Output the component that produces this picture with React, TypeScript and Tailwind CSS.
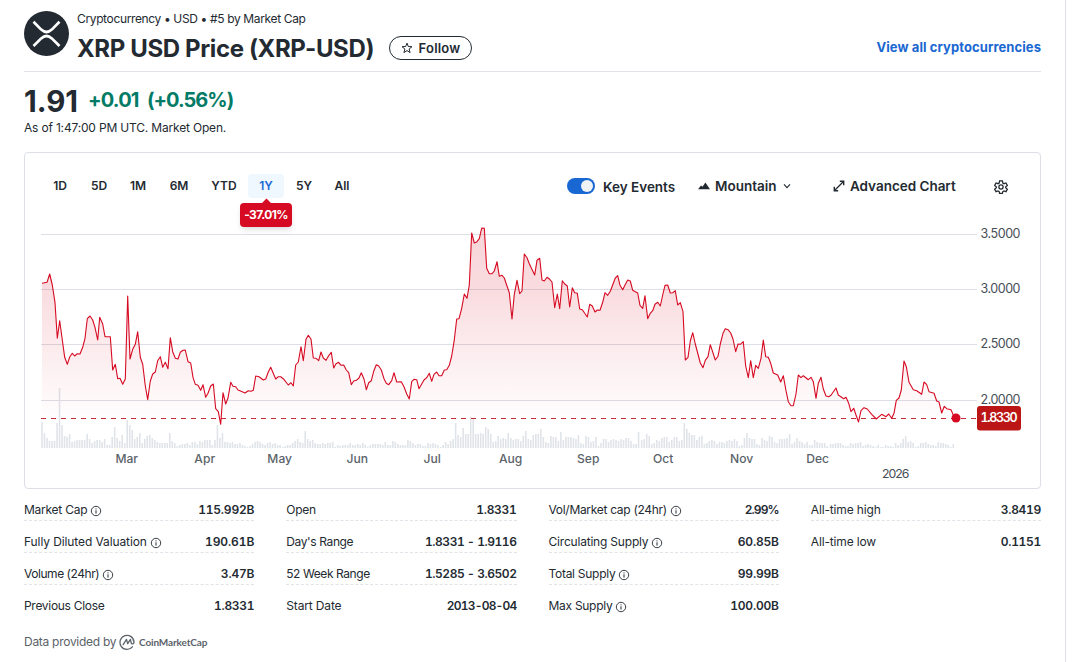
import React from "react";

const RANGES = [
  { label: "1D", box: "w-[32px]" },
  { label: "5D", box: "w-[32px] ml-[7px]" },
  { label: "1M", box: "w-[34px] ml-[6px]" },
  { label: "6M", box: "w-[34px] ml-[7px]" },
  { label: "YTD", box: "w-[42px] ml-[7px]" },
  { label: "1Y", box: "w-[36px] ml-[3px]" },
  { label: "5Y", box: "w-[30px] ml-[5px]" },
  { label: "All", box: "w-[32px] ml-[7px]" },
];

const PRICE =
  "42,283.3 47,282.3 49.7,274 52.3,285 55,302.7 57.3,338.3 59.7,320.7 62.3,340 64.7,357.3 67.3,364.3 69.7,357 72.3,353.3 74.7,356 77.3,353.7 80,354 82.7,347.3 85,338.3 87.3,318.7 90,316 92.7,320 95,327.3 97.7,340 99.7,317.3 102.7,324 105,336.7 110.3,336.7 112.7,370 115.3,364.3 117.7,378.7 120,378.3 122.7,384.3 125.3,379 127.7,296 130,359 132.7,349.3 135.3,344.3 137.7,331.7 140.3,357.3 142.7,364.3 145.3,386 147.7,399.7 150.3,381 152.7,374 155.3,372 157.7,360.7 160.3,356.7 162.7,367.3 165.3,362.3 168,368.7 170.3,337.7 172.7,351.7 175.3,358.3 178,359 180.3,352.3 183,350.3 185.3,350 188,361.7 190.7,363 193,377.3 195.3,384.3 198,385.3 200.7,390.3 203,384.7 205.7,397.3 208,393.3 210.7,386 213.3,384 215.7,408.7 218.3,411.7 220.7,424.3 223,392.7 225.7,404 228,398 230.7,382.3 233,386.3 235.7,386.7 238,390 240,390.7 245,393 248.3,390.7 251,391.3 253.3,390.3 255.7,376 259,376.7 263.3,380 265.7,379 268.3,372 270.7,367.3 275.7,379 278.3,376.7 280.7,376.7 283.3,378.7 288.3,385 291,382.7 293.3,386 295.7,365 298.3,362 301,346.7 303.3,360.7 306,339.3 308.3,335.3 311,339 313.3,358 316,358.3 318.7,360.7 321,352 323.3,358 326,360.3 328.7,355.7 331.3,352.3 333.7,368 336,363.7 338.7,362.3 341,365.3 343.7,365 346.3,370 348.7,372.7 351.3,384.7 353.7,381 356.3,380.3 359,378 361.3,372.7 364,379 366.3,389.7 368.7,382.7 371.3,380.7 373.7,371.3 376.3,364.7 378.7,366 381.3,370 384,378.7 386.3,383.3 388.7,384.7 391.7,380.7 394,372.7 396.7,382 401.3,381.7 404,386.7 406.7,394 409.3,399 411.7,381.7 414,379.3 416.7,379.7 419,388.7 421.7,384 424,380 426.7,377.7 429.3,373.3 431.7,381.3 434,374.3 436.7,372 439,375.7 441.7,375.7 444.3,370 446.7,369.7 449.3,365.3 451.7,356 454.2,340.7 456.7,319 459,318.7 461.7,308.3 464.3,294 467,298.3 469.3,285 471.7,233 474.3,243 477,241.7 479.3,238.7 481.7,228 484.3,228.3 486.7,268.3 489.3,273.7 492,273.7 494.3,271 497,261.7 499.3,276.3 502,275.3 504.3,278 507,286 509.3,292.7 512,319 514.3,294.3 517,280.3 519.7,293.7 522,291 524.3,254 527,257.7 529.3,263.7 534.7,275 537,260.3 539.7,258.3 542,280 544.3,281 547,277.3 549.7,279.3 552,282 554.7,307.7 557.3,294 559.7,308.7 562.3,280.7 564.7,284 567.3,286 569.7,307 572.3,287.7 574.7,292.7 577.3,293.3 579.7,309 582.3,309.7 584.7,313.3 587.3,317 589.7,304.3 592.3,306 595,312 597.3,310 600,310.3 602.7,302.3 605,292.7 607.7,295.3 610.3,291.3 615.3,278 617.7,275.7 620,285.3 622.7,289.7 625,285 627.7,280 630.3,281 632.7,290.3 635.3,291.7 637.7,293 640,305.3 642.7,308.3 645,295.7 647.7,318.7 650,313.7 652.7,310.7 655,304.3 657.7,302.3 660.3,306 662.7,295 665,285.3 667.7,285 670.3,293 672.7,292.7 675.3,290.7 677.7,305 680.3,302.7 683,311.7 685.3,360 688,357.3 690.3,341 692.7,332.7 695.3,344 700.3,363 703,367.7 705.3,360.3 708,356.7 710.3,344.7 715.3,360 718,356.3 720.3,344 723,333.3 725.3,328.7 728,329.7 730.7,333 733,339 735.7,351.7 738,344 740.3,344.3 743.3,341.7 745.7,366 748.3,377.7 750.7,360.7 753.3,377.7 755.7,365.3 758.3,368.3 761,358.3 763.3,340 765.7,356.7 768.3,357.3 770.7,363.3 773.3,373 777.7,375 780.7,382 783.3,375.7 786,390.7 788.3,401.7 791,405.7 793.3,405.7 796,394 798.3,375 801,377.7 803.3,375.7 808.3,379.7 811,377.3 813.3,381.7 816,398.3 818.3,383.3 821,377.3 823.3,389 826,396 828.7,396.7 831,395.3 836,388 838.3,395 843.7,398.7 846,397.3 848.7,403.3 851,411.7 853.7,408.3 856,415 858.5,422 861,410.7 864,407.7 867.3,409 871.7,414.3 876.3,419 881.7,414.3 886,416.7 888.7,414 891.7,418.3 894,413.3 896.3,400.3 899,398 901.3,390 904,361 906.3,366.7 909,382.3 913.3,389.7 916.7,390.7 921.7,394.3 924,382 926.7,384.7 929,391.7 934,393.3 936.7,401 939,402 941.7,413 944.3,406.3 946.7,408.7 951,409.7 953.3,415 956,418";

// Daily volume bars, grouped by the x position of the group's first bar.
const VOLUME = [
  { x: 42, bars: [26, 15, 10, 7, 7, 7, 25, 60, 23, 12, 11, 14, 6, 7, 8, 8, 8, 8, 14, 9, 5, 7, 8, 8, 6, 9, 3, 3, 11, 21, 10, 7, 13, 5, 28, 23, 18, 9, 11, 15, 5, 9, 12, 13, 10, 8, 6, 5, 5, 5, 5, 15, 7, 5, 2, 3, 4, 4, 5, 3, 6, 6, 4, 7, 6, 8, 8, 8, 3, 8, 23, 10, 15, 6, 6, 5, 6, 4, 4] },
  { x: 240, bars: [5, 3, 2, 1, 2, 4, 6, 7, 6, 4, 3, 5, 6, 4, 5, 3, 3, 1, 2, 3, 3, 5, 7, 9, 6, 5, 17, 9, 7, 8, 5, 4, 4, 5, 4, 5, 5, 6, 1, 3, 2, 3, 3, 3, 5, 3, 3, 4, 3, 5, 3, 1, 3, 4, 4, 4, 4, 3, 6, 3, 3, 7, 6, 4, 3, 3, 3, 8, 7, 5, 3, 4, 4, 2, 2, 5, 4, 5, 4, 3] },
  { x: 440.6, bars: [1, 3, 6, 4, 7, 9, 25, 13, 11, 20, 14, 14, 31, 30, 14, 14, 15, 14, 21, 19, 14, 6, 7, 12, 9, 10, 9, 15, 10, 8, 9, 9, 7, 12, 17, 9, 8, 13, 14, 14, 19, 11, 6, 5, 12, 11, 11, 7, 16, 8, 11, 11, 11, 10, 9, 13, 5, 4, 12, 11, 6, 7, 11, 2, 5, 9, 9, 6, 8, 9, 8, 7, 9, 8, 10, 10, 7, 4, 4, 16] },
  { x: 641.7, bars: [8, 9, 14, 12, 4, 5, 8, 7, 10, 11, 11, 6, 8, 11, 11, 7, 8, 25, 19, 15, 13, 13, 8, 11, 12, 4, 5, 7, 8, 7, 4, 6, 6, 5, 7, 8, 7, 9, 7, 2, 3, 10, 15, 10, 9, 9, 4, 3, 10, 8, 7, 12, 11, 6, 5, 9, 9, 9, 10, 14, 4, 6, 10, 7, 6, 4, 6, 3, 3, 8, 6, 5, 5, 5, 2] },
  { x: 830.5, bars: [4, 4, 5, 5, 5, 3, 2, 2, 5, 4, 5, 5, 6, 2, 3, 4, 3, 2, 1, 3, 1, 1, 3, 2, 2, 1, 5, 3, 5, 9, 12, 6, 7, 5, 1, 2, 5, 5, 6, 4, 3, 3, 2, 6, 5, 5, 4, 3, 1, 4] },
];
const STEP = 2.506;

const GRID = [
  { y: 234, label: "3.5000" },
  { y: 289, label: "3.0000" },
  { y: 344, label: "2.5000" },
  { y: 400, label: "2.0000" },
];

const MONTHS = [
  { x: 127, label: "Mar" },
  { x: 205, label: "Apr" },
  { x: 280, label: "May" },
  { x: 357.5, label: "Jun" },
  { x: 432.5, label: "Jul" },
  { x: 511, label: "Aug" },
  { x: 588.5, label: "Sep" },
  { x: 663.5, label: "Oct" },
  { x: 742, label: "Nov" },
  { x: 818, label: "Dec" },
];

const STATS = [
  [
    { label: "Market Cap", value: "115.992B", info: true, track: "tracking-[-0.25px]", num: "tracking-[-0.2px]" },
    { label: "Fully Diluted Valuation", value: "190.61B", info: true, track: "tracking-[-0.1px]", num: "tracking-[-0.1px]" },
    { label: "Volume (24hr)", value: "3.47B", info: true, track: "tracking-[-0.45px]", num: "tracking-[-0.2px]" },
    { label: "Previous Close", value: "1.8331", track: "tracking-[-0.3px]", num: "tracking-[-0.3px]" },
  ],
  [
    { label: "Open", value: "1.8331", track: "tracking-[-0.25px]", num: "tracking-[-0.3px]" },
    { label: "Day's Range", value: "1.8331 - 1.9116", track: "tracking-[-0.38px]", num: "tracking-[-0.45px]" },
    { label: "52 Week Range", value: "1.5285 - 3.6502", track: "tracking-[-0.42px]", num: "tracking-[-0.45px]" },
    { label: "Start Date", value: "2013-08-04", track: "tracking-[-0.15px]", num: "tracking-[-0.8px]" },
  ],
  [
    { label: "Vol/Market cap (24hr)", value: "2.99%", info: true, track: "tracking-[-0.3px]", num: "tracking-[-0.9px]" },
    { label: "Circulating Supply", value: "60.85B", info: true, track: "tracking-[-0.2px]", num: "tracking-[-0.2px]" },
    { label: "Total Supply", value: "99.99B", info: true, track: "tracking-[-0.28px]", num: "tracking-[-0.2px]" },
    { label: "Max Supply", value: "100.00B", info: true, track: "tracking-[-0.28px]", num: "tracking-[-0.2px]" },
  ],
  [
    { label: "All-time high", value: "3.8419", track: "tracking-[-0.15px]", num: "tracking-[-0.3px]" },
    { label: "All-time low", value: "0.1151", track: "tracking-[-0.15px]", num: "tracking-[-0.3px]" },
  ],
];

function XrpLogo() {
  return (
    <svg viewBox="0 0 45 45" className="size-[45px] shrink-0">
      <circle cx="22.5" cy="22.5" r="22.5" fill="#232a31" />
      <g fill="none" stroke="#fff" strokeWidth="2.7">
        <path d="M9.5 10.8 L17.2 18.6 Q22.5 23.4 27.8 18.6 L35.5 10.8" />
        <path d="M9.5 35 L17.2 27.4 Q22.5 22.6 27.8 27.4 L35.5 35" />
      </g>
    </svg>
  );
}

function InfoIcon() {
  return (
    <svg viewBox="0 0 12 12" className="mt-[2px] size-3 shrink-0">
      <circle cx="6" cy="6" r="4.7" fill="none" stroke="#232a31" strokeWidth="0.9" />
      <path d="M6 5.3V8.6M6 3.4V4.4" stroke="#232a31" strokeWidth="1" />
    </svg>
  );
}

function PriceChart() {
  return (
    <svg
      viewBox="25 225 1015 263"
      className="block h-[263px] w-[1015px] font-['Inter',sans-serif]"
    >
      <defs>
        <linearGradient id="area" gradientUnits="userSpaceOnUse" x1="0" y1="228" x2="0" y2="424">
          <stop offset="0" stopColor="#d60a22" stopOpacity="0.17" />
          <stop offset="0.3" stopColor="#d60a22" stopOpacity="0.145" />
          <stop offset="1" stopColor="#d60a22" stopOpacity="0" />
        </linearGradient>
      </defs>
      {GRID.map((g) => (
        <g key={g.label}>
          <rect x="41" y={g.y} width="936" height="1" fill="#dcdfe5" />
          <text x="980.5" y={g.y + 4} fontSize="12.5" fill="#464e56" textLength="40">
            {g.label}
          </text>
        </g>
      ))}
      {VOLUME.map((group) =>
        group.bars.map((h, i) => (
          <rect
            key={`${group.x}-${i}`}
            x={group.x + i * STEP - 0.8}
            y={448 - h}
            width="1.6"
            height={h}
            fill="#e0e4e9"
          />
        ))
      )}
      <polygon points={`42,424 ${PRICE} 956,424`} fill="url(#area)" />
      <path d="M41 418.5H977" stroke="#c92a35" strokeWidth="1" strokeDasharray="5 5" />
      <polyline points={PRICE} fill="none" stroke="#d60a22" strokeWidth="1.1" strokeLinejoin="round" />
      <circle cx="956" cy="418" r="4.5" fill="#d60a22" />
      <rect x="977" y="406" width="44" height="24.5" rx="3" fill="#bb1515" />
      <text x="980.5" y="422.3" fontSize="12.5" fontWeight="600" fill="#fff" textLength="37" className="tabular-nums">
        1.8330
      </text>
      {MONTHS.map((m) => (
        <text key={m.label} x={m.x - 0.3} y="463" fontSize="12.1" fontWeight="500" fill="#5b636a" textAnchor="middle">
          {m.label}
        </text>
      ))}
      <text x="882" y="478" fontSize="12.3" fill="#464e56" textLength="27.5">
        2026
      </text>
    </svg>
  );
}

export default function App() {
  return (
    <div className="h-[662px] w-[1066px] overflow-hidden border-r border-[#dcdfe5] bg-white pl-6 pr-6 font-['Inter',sans-serif] text-[#232a31]">
      <header className="flex h-[72px] w-[1017px] justify-between border-b border-[#e0e4e9]">
        <div className="flex gap-2 pt-[11px]">
          <XrpLogo />
          <div>
            <div className="h-4 whitespace-nowrap text-[12px] leading-4 tracking-[-0.36px]">
              Cryptocurrency • USD • #5 by Market Cap
            </div>
            <div className="flex items-start pt-[9px]">
              <h1 className="w-[312px] whitespace-nowrap pt-px text-[24px] font-bold leading-6 tracking-[-0.37px]">
                XRP USD Price (XRP-USD)
              </h1>
              <button className="flex h-6 w-[83px] items-center justify-center gap-[6px] rounded-full border border-[#232a31] text-[13px] font-semibold">
                <svg viewBox="0 0 12 12" className="size-3">
                  <path
                    d="M6 1.1 7.3 4.5 11 4.7 8.1 7 9.1 10.6 6 8.6 2.9 10.6 3.9 7 1 4.7 4.7 4.5Z"
                    fill="none"
                    stroke="#232a31"
                    strokeWidth="1"
                  />
                </svg>
                <span className="pt-px tracking-[0.2px]">Follow</span>
              </button>
            </div>
          </div>
        </div>
        <a className="whitespace-nowrap pt-[38px] text-[13px] font-bold leading-[18px] tracking-[0.08px] text-[#1967d2]">
          View all cryptocurrencies
        </a>
      </header>

      <section className="h-20 pt-[12px]">
        <div className="flex h-8 items-center whitespace-nowrap font-bold">
          <span className="w-[64px] pt-px text-[29.5px] leading-8">1.91</span>
          <span className="w-[59px] text-[20px] leading-8 tracking-[-0.8px] text-[#037b66]">+0.01</span>
          <span className="text-[20px] leading-8 tracking-[-1px] text-[#037b66]">(+0.56%)</span>
        </div>
        <div className="mt-[4px] whitespace-nowrap text-[12px] leading-4 tracking-[-0.18px]">
          As of 1:47:00 PM UTC. Market Open.
        </div>
      </section>

      <section className="h-[337px] w-[1017px] rounded border border-[#dcdfe5]">
        <div className="flex h-[72px] justify-between pl-[19px] pr-[32px] pt-[21px]">
          <div className="flex text-[12px] font-semibold">
            {RANGES.map((r) => (
              <div key={r.label} className={r.box}>
                <div
                  className={
                    r.label === "1Y"
                      ? "relative flex h-6 items-center justify-center rounded bg-[#f0f8ff] text-[#1a6ad6]"
                      : "flex h-6 items-center justify-center"
                  }
                >
                  {r.label}
                  {r.label === "1Y" && (
                    <div className="absolute left-[-8px] top-[29px] flex h-6 w-[52px] items-center justify-center rounded bg-[#d60a22] text-[12px] font-bold tracking-[-0.6px] text-white shadow-md">
                      <span className="absolute top-[-3px] size-[7px] rotate-45 bg-[#d60a22]" />
                      <span className="relative">-37.01%</span>
                    </div>
                  )}
                </div>
              </div>
            ))}
          </div>
          <div className="flex h-6 items-center whitespace-nowrap text-[13.5px] font-semibold">
            <span className="flex h-4 w-7 items-center justify-end rounded-full bg-[#1967d2] pr-[2px]">
              <span className="size-3 rounded-full bg-[#f0f3f5]" />
            </span>
            <span className="ml-2 w-[95px] pt-[2px]">Key Events</span>
            <svg viewBox="0 0 12 8" className="h-2 w-3">
              <path d="M0 7.2 3 3.4 4.5 4.7 7.4 0.6 12 7.2Z" fill="#232a31" />
            </svg>
            <span className="ml-[5px] w-[68px]">Mountain</span>
            <svg viewBox="0 0 8 8" className="size-2">
              <path d="M1 2.4 4 5.6 7 2.4" fill="none" stroke="#232a31" strokeWidth="1.1" />
            </svg>
            <svg viewBox="0 0 12 12" className="ml-[42px] size-3">
              <path d="M2 10 10 2" stroke="#232a31" strokeWidth="1.2" />
              <path d="M6.8 1.3H10.7V5.2M1.3 6.8V10.7H5.2" fill="none" stroke="#232a31" strokeWidth="1.4" />
            </svg>
            <span className="ml-[5px] w-[144px] tracking-[-0.02px]">Advanced Chart</span>
            <svg viewBox="0 0 24 24" className="mt-[2px] size-[14px]" fill="none" stroke="#232a31" strokeWidth="2.2">
              <path d="M9.6 1.6h4.8l.7 3.6 2 1.1 3.4-1.2 2.4 4.2-2.8 2.3v1.8l2.8 2.4-2.4 4.2-3.4-1.2-2 1.1-.7 3.1H9.6l-.7-3.1-2-1.1-3.4 1.2-2.4-4.2 2.8-2.4v-1.8L1.1 9.3l2.4-4.2 3.4 1.2 2-1.1Z" />
              <circle cx="12" cy="12" r="3.6" />
            </svg>
          </div>
        </div>
        <PriceChart />
      </section>

      <section className="grid w-[1017px] grid-cols-4 gap-x-8">
        {STATS.map((col, c) => (
          <div key={c}>
            {col.map((s, i) => (
              <div
                key={s.label}
                className={
                  i < col.length - 1
                    ? "flex h-8 items-center justify-between whitespace-nowrap border-b border-dashed border-[#e0e4e9] pt-[11px] text-[12px]"
                    : "flex h-8 items-center justify-between whitespace-nowrap border-b border-transparent pt-[11px] text-[12px]"
                }
              >
                <span className="flex items-center gap-[3px]">
                  <span className={s.track}>{s.label}</span>
                  {"info" in s && <InfoIcon />}
                </span>
                <span className="font-semibold tabular-nums">
                  <span className={s.num}>{s.value}</span>
                </span>
              </div>
            ))}
          </div>
        ))}
      </section>

      <footer className="mt-[17px] flex h-4 items-center whitespace-nowrap text-[12px] text-[#5b636a]">
        <span className="w-[95px] tracking-[-0.28px]">Data provided by</span>
        <svg viewBox="0 0 16 16" className="size-4" fill="none" stroke="#5b636a" strokeLinecap="round" strokeLinejoin="round">
          <path d="M13.4 12.8A7 7 0 1 1 15 8.2C15 10.4 12.2 10.6 12.1 8.4L11.4 5.4 8.7 9.7 7.5 5.4 4.2 10.6" strokeWidth="1.3" />
        </svg>
        <span className="ml-1 font-['Lato',sans-serif] text-[10px] font-bold tracking-[-0.12px]">CoinMarketCap</span>
      </footer>
    </div>
  );
}
